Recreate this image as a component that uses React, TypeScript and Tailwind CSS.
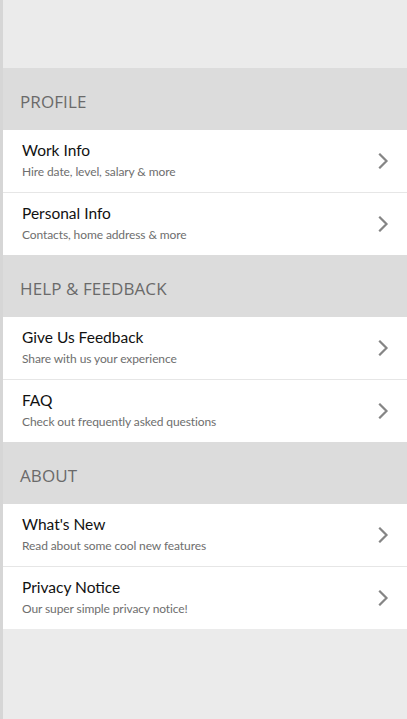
const sections = [
  {
    title: 'PROFILE',
    items: [
      { label: 'Work Info', sub: 'Hire date, level, salary & more' },
      { label: 'Personal Info', sub: 'Contacts, home address & more' },
    ],
  },
  {
    title: 'HELP & FEEDBACK',
    items: [
      { label: 'Give Us Feedback', sub: 'Share with us your experience' },
      { label: 'FAQ', sub: 'Check out frequently asked questions' },
    ],
  },
  {
    title: 'ABOUT',
    items: [
      { label: "What's New", sub: 'Read about some cool new features' },
      { label: 'Privacy Notice', sub: 'Our super simple privacy notice!' },
    ],
  },
];

function Chevron() {
  return (
    <svg className="w-[12px] h-[16px] text-[#858585]" viewBox="0 0 12 16" fill="none" stroke="currentColor">
      <path d="M3 1.5l6.5 6.5L3 14.5" strokeWidth={2.2} strokeLinecap="square" />
    </svg>
  );
}

export default function App() {
  return (
    <div className="min-h-[719px] bg-[#ebebeb] border-l-[3px] border-[#d6d6d6] flex flex-col">
      <div className="h-[68px]" />
      {sections.map((s) => (
        <div key={s.title}>
          {/* Section header */}
          <div className="h-[62px] bg-[#dcdcdc] flex items-center pl-[17px] pt-[6px]">
            <span className="text-[17px] text-[#6a6a6a] font-['Open_Sans',sans-serif] tracking-[0.1px]">{s.title}</span>
          </div>
          {s.items.map((it, i) => (
            <div
              key={it.label}
              className={`bg-white flex items-center pl-[19px] pr-[18px] ${i === 0 ? 'h-[63px] border-b border-[#e6e6e6]' : 'h-[62px]'}`}
            >
              <div className="flex-1 self-start pt-[10px] flex flex-col font-['Lato',sans-serif]">
                <span className="text-[15.5px] leading-[20px] text-[#111]">{it.label}</span>
                <span className="text-[12px] leading-[17px] mt-[3px] tracking-[-0.1px] text-[#6e6e6e]">{it.sub}</span>
              </div>
              <Chevron />
            </div>
          ))}
        </div>
      ))}
    </div>
  );
}
